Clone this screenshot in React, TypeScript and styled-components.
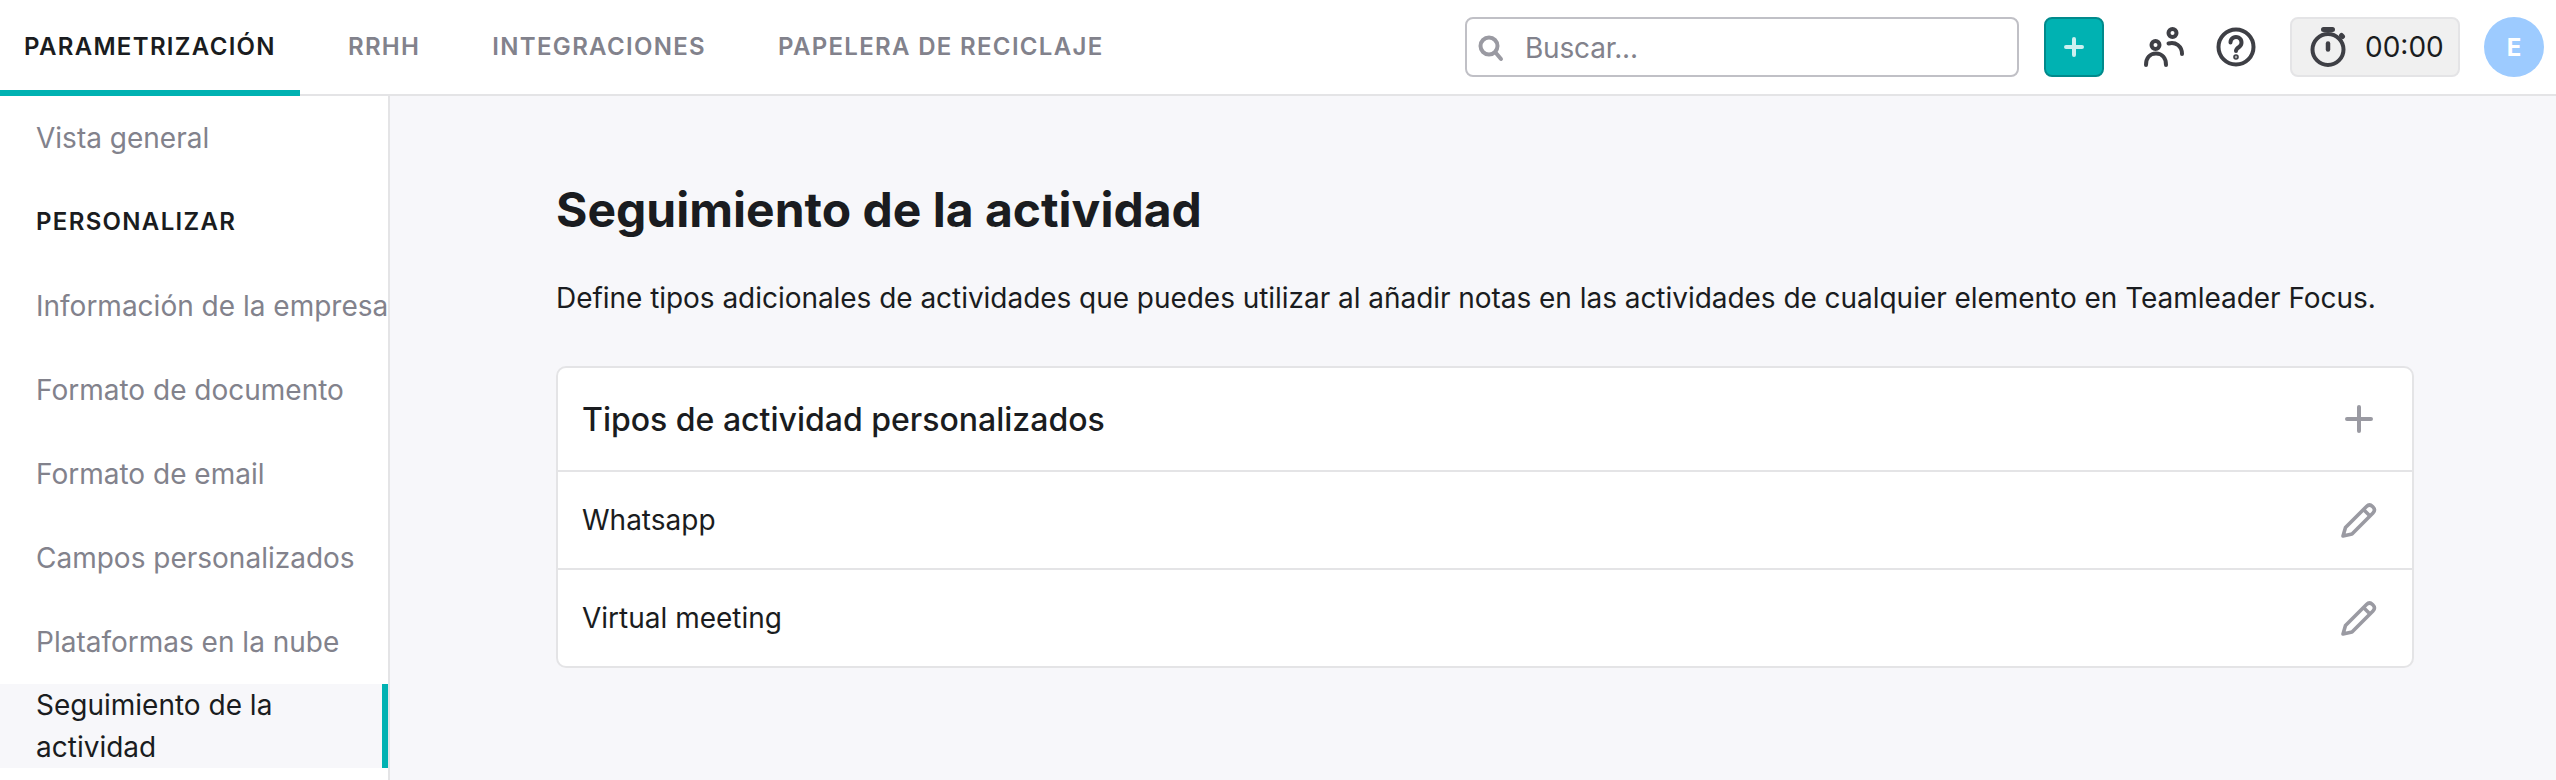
import React from 'react'
import styled, { createGlobalStyle } from 'styled-components'

const GlobalStyle = createGlobalStyle`
  html, body {
    background: #fff;
    height: 100%;
    margin: 0;
    overflow: hidden;
  }
  body {
    color: #1a1c20;
    font-family: Inter, "Liberation Sans", sans-serif;
  }
  * {
    box-sizing: border-box;
  }
`

const Page = styled.div`
  display: flex;
  flex-direction: column;
  height: 780px;
  width: 2556px;
`

const TopBar = styled.header`
  align-items: center;
  background: #fff;
  border-bottom: 2px solid #e4e4e6;
  display: flex;
  flex: none;
  height: 96px;
  justify-content: space-between;
  padding-right: 12px;
`

const Tabs = styled.nav`
  align-self: stretch;
  display: flex;
  gap: 24px;
`

const Tab = styled.a<{ $active?: boolean }>`
  align-items: center;
  border-bottom: 6px solid ${({ $active }) => ($active ? '#00b2b2' : 'transparent')};
  color: ${({ $active }) => ($active ? '#1a1c20' : '#82828c')};
  display: flex;
  font-size: 24px;
  font-weight: 600;
  height: 96px;
  letter-spacing: 1.32px;
  padding: 3px 24px 0;
  text-transform: uppercase;
`

const Tools = styled.div`
  align-items: center;
  display: flex;
`

const Search = styled.label`
  align-items: center;
  background: #fff;
  border: 2px solid #c0c0c6;
  border-radius: 8px;
  color: #82828c;
  display: flex;
  font-size: 28px;
  gap: 20px;
  height: 60px;
  letter-spacing: -0.2px;
  padding-left: 10px;
  padding-top: 1px;
  width: 554px;
`

const AddButton = styled.button`
  align-items: center;
  background: #00b2b2;
  border: 2px solid #008a8c;
  border-radius: 8px;
  display: flex;
  height: 60px;
  justify-content: center;
  margin-left: 25px;
  padding: 0;
  width: 60px;
`

const IconButton = styled.span<{ $left: number }>`
  display: flex;
  margin-left: ${({ $left }) => $left}px;
`

const Timer = styled.div`
  align-items: center;
  background: #f0f0f0;
  border: 2px solid #e4e4e6;
  border-radius: 8px;
  display: flex;
  font-size: 28px;
  gap: 19px;
  height: 60px;
  margin-left: 34px;
  padding-left: 18px;
  width: 170px;
`

const Avatar = styled.div`
  align-items: center;
  background: #9dcbff;
  border-radius: 50%;
  color: #fff;
  display: flex;
  font-size: 24px;
  font-weight: 700;
  height: 60px;
  justify-content: center;
  margin-left: 24px;
  width: 60px;
`

const Body = styled.div`
  display: flex;
  flex: 1;
  min-height: 0;
`

const Sidebar = styled.aside`
  background: #fff;
  border-right: 2px solid #e4e4e6;
  flex: none;
  width: 390px;
`

const SideItem = styled.a<{ $active?: boolean }>`
  background: ${({ $active }) => ($active ? '#f7f7fa' : 'transparent')};
  border-right: 6px solid ${({ $active }) => ($active ? '#00b2b2' : 'transparent')};
  color: ${({ $active }) => ($active ? '#1a1c20' : '#82828c')};
  display: block;
  font-size: 28px;
  line-height: 42px;
  padding: ${({ $active }) => ($active ? '0' : '21px')} 0 ${({ $active }) => ($active ? '0' : '21px')} 36px;
  white-space: ${({ $active }) => ($active ? 'normal' : 'nowrap')};
`

const SideHeading = styled.div`
  color: #1a1c20;
  font-size: 24px;
  font-weight: 600;
  letter-spacing: 1.32px;
  line-height: 42px;
  padding: 21px 0 21px 36px;
  text-transform: uppercase;
`

const Main = styled.main`
  background: #f7f7fa;
  flex: 1;
  padding: 78px 142px 0 166px;
`

const Title = styled.h1`
  font-size: 48px;
  font-weight: 700;
  line-height: 72px;
  margin: 0 0 31px;
`

const Intro = styled.p`
  font-size: 28px;
  letter-spacing: -0.04px;
  line-height: 42px;
  margin: 0 0 47px;
  white-space: nowrap;
`

const Card = styled.section`
  background: #fff;
  border: 2px solid #e4e4e6;
  border-radius: 10px;
`

const Row = styled.div<{ $head?: boolean }>`
  align-items: center;
  border-top: ${({ $head }) => ($head ? 'none' : '2px solid #e4e4e6')};
  display: flex;
  font-size: ${({ $head }) => ($head ? '32px' : '28px')};
  font-weight: ${({ $head }) => ($head ? 500 : 400)};
  height: ${({ $head }) => ($head ? '102px' : '98px')};
  justify-content: space-between;
  padding: 0 35px 0 24px;
`

const IconSlot = styled.span`
  display: flex;
  justify-content: center;
  width: 36px;
`

const SearchIcon = () => (
  <svg width="28" height="28" viewBox="0 0 28 28" fill="none" stroke="#9a9aa2" strokeWidth="4" strokeLinecap="round">
    <circle cx="12" cy="12" r="8.5" />
    <path d="M18.5 18.5 24 25" />
  </svg>
)

const PlusIcon = ({ color, size, width }: { color: string; size: number; width: number }) => (
  <svg width={size} height={size} viewBox={`0 0 ${size} ${size}`} fill="none" stroke={color} strokeWidth={width} strokeLinecap="round">
    <path d={`M${size / 2} ${width / 2}V${size - width / 2}M${width / 2} ${size / 2}H${size - width / 2}`} />
  </svg>
)

const PeopleIcon = () => (
  <svg width="40" height="40" viewBox="0 0 40 40" fill="none" stroke="#3e3f45" strokeWidth="4" strokeLinecap="round">
    <circle cx="11.5" cy="18" r="4" />
    <path d="M2 38C2 31 6 26.5 12 26.5S22 31 22 38" />
    <circle cx="28.5" cy="6" r="4" />
    <path d="M24.5 16.5C31.5 14.5 38 19 38 27" />
  </svg>
)

const HelpIcon = () => (
  <svg width="40" height="40" viewBox="0 0 40 40" fill="none" stroke="#3e3f45" strokeWidth="4" strokeLinecap="round">
    <circle cx="20" cy="20" r="17.5" />
    <path d="M14.5 15.5a5.5 5.5 0 1 1 8.6 4.5c-2.1 1.4-3.1 2.4-3.1 4" />
    <circle cx="20" cy="30" r="0.8" fill="#3e3f45" />
  </svg>
)

const StopwatchIcon = () => (
  <svg width="36" height="40" viewBox="0 0 36 40" fill="none" stroke="#3e3f45" strokeWidth="4" strokeLinecap="round">
    <circle cx="18" cy="22.5" r="15.5" />
    <path d="M13.5 2.5h9M31.5 8.5l1 1" strokeWidth="5" />
    <path d="M18 16.5v6" strokeWidth="4.5" />
  </svg>
)

const PencilIcon = () => (
  <svg width="36" height="36" viewBox="0 0 36 36" fill="none" stroke="#9a9aa2" strokeWidth="3.6" strokeLinejoin="round">
    <path d="M2 34l2.5-8.5L25.5 4.5q3-3 6 0l0.5 0.5q3 3 0 6L11 32Z" />
    <path d="M22.5 7.5l6.5 6.5" />
  </svg>
)

const rows = ['Whatsapp', 'Virtual meeting']

const App = () => (
  <Page>
    <GlobalStyle />
    <TopBar>
      <Tabs>
        <Tab $active>Parametrización</Tab>
        <Tab>RRHH</Tab>
        <Tab>Integraciones</Tab>
        <Tab>Papelera de reciclaje</Tab>
      </Tabs>
      <Tools>
        <Search>
          <SearchIcon />
          Buscar...
        </Search>
        <AddButton>
          <PlusIcon color="#ccf0f0" size={20} width={4} />
        </AddButton>
        <IconButton $left={40}>
          <PeopleIcon />
        </IconButton>
        <IconButton $left={32}>
          <HelpIcon />
        </IconButton>
        <Timer>
          <StopwatchIcon />
          00:00
        </Timer>
        <Avatar>E</Avatar>
      </Tools>
    </TopBar>
    <Body>
      <Sidebar>
        <SideItem>Vista general</SideItem>
        <SideHeading>Personalizar</SideHeading>
        <SideItem>Información de la empresa</SideItem>
        <SideItem>Formato de documento</SideItem>
        <SideItem>Formato de email</SideItem>
        <SideItem>Campos personalizados</SideItem>
        <SideItem>Plataformas en la nube</SideItem>
        <SideItem $active>Seguimiento de la actividad</SideItem>
      </Sidebar>
      <Main>
        <Title>Seguimiento de la actividad</Title>
        <Intro>
          Define tipos adicionales de actividades que puedes utilizar al añadir notas en las actividades de cualquier elemento en Teamleader Focus.
        </Intro>
        <Card>
          <Row $head>
            Tipos de actividad personalizados
            <IconSlot>
              <PlusIcon color="#9a9aa2" size={28} width={4} />
            </IconSlot>
          </Row>
          {rows.map(name => (
            <Row key={name}>
              {name}
              <IconSlot>
                <PencilIcon />
              </IconSlot>
            </Row>
          ))}
        </Card>
      </Main>
    </Body>
  </Page>
)

export default App
